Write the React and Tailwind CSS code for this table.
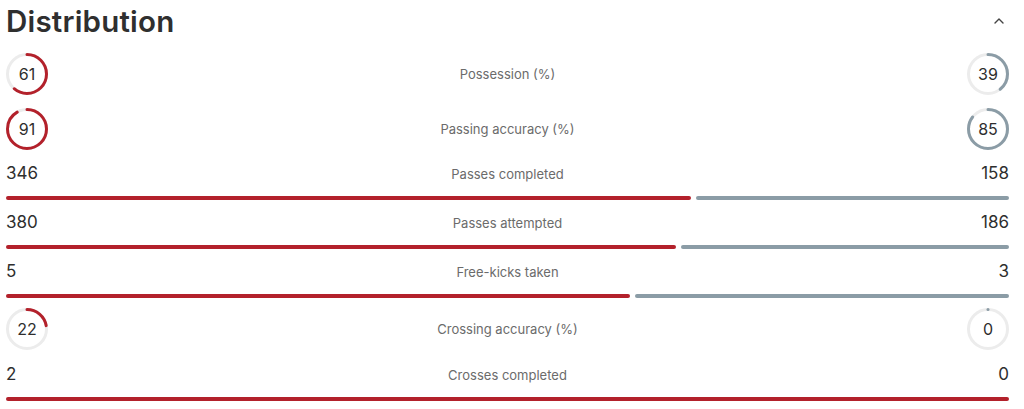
import React from "react";

const RED = "#b3212b";
const GREY = "#8b9ca6";

function Ring({ value, color }) {
  const r = 19.5;
  const c = 2 * Math.PI * r;
  const len = (value / 100) * c;
  return (
    <div className="relative w-[42px] h-[42px] shrink-0">
      <svg width="42" height="42" viewBox="0 0 42 42" className="absolute inset-0">
        <circle cx="21" cy="21" r={r} fill="none" stroke="#ececec" strokeWidth="3" />
        <circle
          cx="21"
          cy="21"
          r={r}
          fill="none"
          stroke={color}
          strokeWidth="3"
          strokeLinecap="round"
          strokeDasharray={`${len} ${c}`}
          transform="rotate(-90 21 21)"
        />
      </svg>
      <div className="absolute inset-0 flex items-center justify-center text-[16px] text-[#2e2e2e]">
        {value}
      </div>
    </div>
  );
}

function RingRow({ label, l, r, className }) {
  return (
    <div className={"flex items-center justify-between " + className}>
      <Ring value={l} color={RED} />
      <div className="text-[13px] text-[#6b6b6b] translate-y-[1px]">{label}</div>
      <Ring value={r} color={GREY} />
    </div>
  );
}

function BarRow({ label, l, r, className }) {
  return (
    <div className={className}>
      <div className="flex items-center justify-between h-[20px]">
        <div className="w-[80px] text-[17px] text-[#2e2e2e]">{l}</div>
        <div className="text-[13px] text-[#6b6b6b] translate-y-[1px]">{label}</div>
        <div className="w-[80px] text-right text-[17px] text-[#2e2e2e]">{r}</div>
      </div>
      <div className="flex gap-[5px] mt-[12px] h-[4px]">
        {l > 0 && (
          <div className="h-[4px] rounded-full bg-[#b3212b]" style={{ flexGrow: l, flexBasis: 0 }} />
        )}
        {r > 0 && (
          <div className="h-[4px] rounded-full bg-[#8b9ca6]" style={{ flexGrow: r, flexBasis: 0 }} />
        )}
      </div>
    </div>
  );
}

export default function App() {
  return (
    <div
      className="w-[1024px] h-[409px] bg-white pl-[6px] pr-[15px] overflow-hidden"
      style={{ fontFamily: "Inter, 'Noto Sans', sans-serif" }}
    >
      <div className="flex items-center justify-between h-[45px]">
        <h2 className="text-[29.5px] font-semibold text-[#2f2f2f] leading-none -mt-[2px] tracking-[0.2px]">
          Distribution
        </h2>
        <svg width="12" height="8" viewBox="0 0 12 8" className="mr-[4px] -mt-[4px]">
          <path d="M2 6 L6 2 L10 6" fill="none" stroke="#444" strokeWidth="1.4" strokeLinecap="round" strokeLinejoin="round" />
        </svg>
      </div>
      <RingRow label="Possession (%)" l={61} r={39} className="mt-[8px]" />
      <RingRow label="Passing accuracy (%)" l={91} r={85} className="mt-[13px]" />
      <BarRow label="Passes completed" l={346} r={158} className="mt-[14px]" />
      <BarRow label="Passes attempted" l={380} r={186} className="mt-[13px]" />
      <BarRow label="Free-kicks taken" l={5} r={3} className="mt-[13px]" />
      <RingRow label="Crossing accuracy (%)" l={22} r={0} className="mt-[10px]" />
      <BarRow label="Crosses completed" l={2} r={0} className="mt-[15px]" />
    </div>
  );
}
